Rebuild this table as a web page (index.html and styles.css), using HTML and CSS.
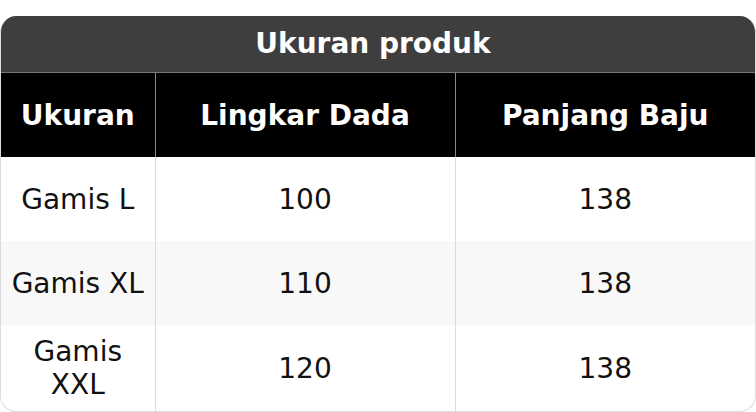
FILE: index.html
```html
<!DOCTYPE html>
<html>
<head>
<meta charset="utf-8">
<link rel="stylesheet" href="styles.css">
</head>
<body>
<div class="card">
  <div class="title">Ukuran produk</div>
  <table class="sizes">
    <colgroup><col class="c1"><col class="c2"><col class="c3"></colgroup>
    <thead>
      <tr><th>Ukuran</th><th>Lingkar Dada</th><th>Panjang Baju</th></tr>
    </thead>
    <tbody>
      <tr><td>Gamis L</td><td>100</td><td>138</td></tr>
      <tr class="alt"><td>Gamis XL</td><td>110</td><td>138</td></tr>
      <tr><td>Gamis XXL</td><td>120</td><td>138</td></tr>
    </tbody>
  </table>
</div>
</body>
</html>
```
FILE: styles.css
```css
html, body { margin: 0; padding: 0; background: #fff; }
body { font-family: "DejaVu Sans", sans-serif; font-size: 28px; color: #111; }
.card {
  margin-top: 16px;
  width: 756px;
  box-sizing: border-box;
  border: 1px solid #dcdcdc;
  border-top: none;
  border-radius: 16px;
  overflow: hidden;
}
.title {
  background: #3e3e3e;
  color: #fff;
  font-weight: bold;
  text-align: center;
  height: 56px;
  line-height: 56px;
  padding-right: 10px;
  border-bottom: 1px solid #777;
}
.sizes { width: 100%; border-collapse: collapse; table-layout: fixed; }
.c1 { width: 154px; }
.c2 { width: 300px; }
.sizes th {
  background: #000;
  color: #fff;
  font-weight: bold;
  height: 84px;
  padding: 0 10px;
  box-sizing: border-box;
  border-left: 1px solid #888;
}
.sizes td {
  height: 84px;
  padding: 10px;
  box-sizing: border-box;
  text-align: center;
  border-left: 1px solid #dcdcdc;
}
.sizes th:first-child, .sizes td:first-child { border-left: none; }
.alt td { background: #f8f8f8; }
```
